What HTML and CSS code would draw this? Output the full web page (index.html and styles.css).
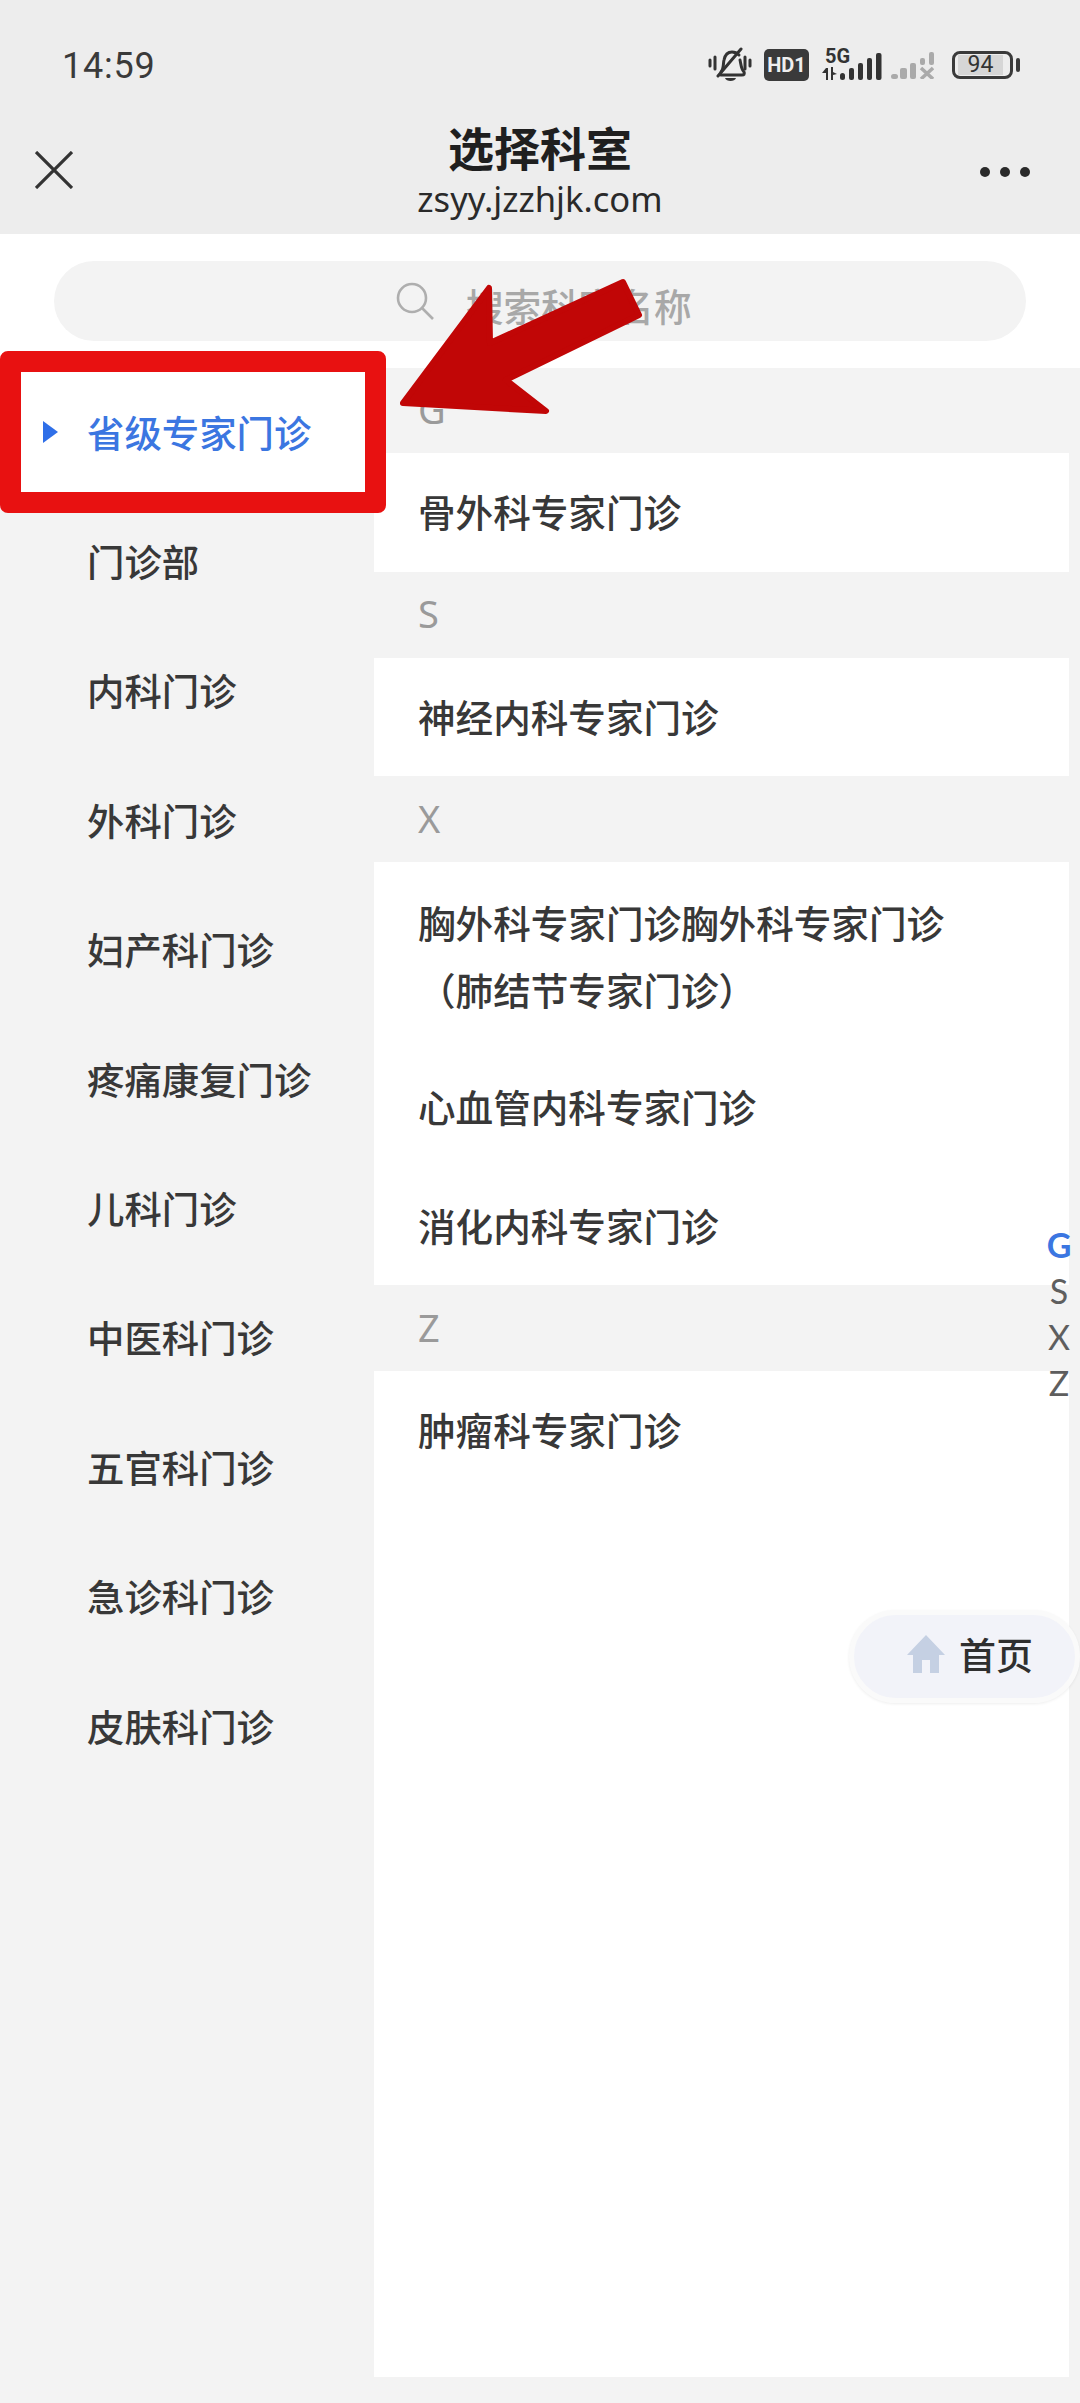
FILE: index.html
```html
<!DOCTYPE html>
<html lang="zh-CN">
<head>
<meta charset="utf-8">
<title>选择科室</title>
<link rel="stylesheet" href="styles.css">
</head>
<body>
<div class="page">
  <header class="topbar">
    <div class="status">
      <span class="clock">14:59</span>
      <div class="status-icons">
        <svg class="ico-bell" viewBox="0 0 44 36" width="44" height="36"><g fill="none" stroke="#333" stroke-width="3" stroke-linecap="round"><path d="M13 25c3-3 2-8 3-12 1-5 4-8 8-8 3 0 5 1 7 3M32 13c1 4 1 9 4 12 1 2 0 3-2 3H13"/><path d="M10 29 33 2"/><path d="M2 13v6M7 10v12M37 10v12M42 13v6"/></g><path d="M17 31h11c-1 4-10 4-11 0z" fill="#333"/></svg>
        <span class="hd">HD1</span>
        <div class="signal">
          <span class="fiveg">5G</span>
          <svg viewBox="0 0 60 27" width="60" height="27"><g fill="#333"><path d="M0 20 4 15h2v12H4v-7zM9 14h2v5l4 2-4 1v5H9z"/><rect x="18" y="20" width="5" height="7" rx="2.5"/><rect x="27" y="15" width="5" height="12" rx="2"/><rect x="36" y="10" width="5" height="17" rx="2"/><rect x="45" y="5" width="5" height="22" rx="2"/><rect x="54" y="0" width="5.5" height="27" rx="2"/></g></svg>
        </div>
        <svg class="signal-off" viewBox="0 0 43 27" width="43" height="27"><g fill="#aaa"><rect x="0" y="22" width="7" height="5" rx="2.5"/><rect x="9" y="16" width="7" height="11" rx="2"/><rect x="19" y="11" width="6" height="16" rx="2"/><rect x="29" y="6" width="5" height="7" rx="2"/><rect x="38" y="0" width="5" height="13" rx="2"/></g><path d="M30 16 42 27M42 16 30 27" stroke="#aaa" stroke-width="3.5"/></svg>
        <div class="battery"><span class="battery-level">94</span></div>
      </div>
    </div>
    <div class="titlebar">
      <svg class="close" viewBox="0 0 38 38" width="38" height="38"><path d="M1 1 37 37M37 1 1 37" stroke="#333" stroke-width="3.2" fill="none"/></svg>
      <div class="title-block">
        <div class="title">选择科室</div>
        <div class="url">zsyy.jzzhjk.com</div>
      </div>
      <div class="more"><i></i><i></i><i></i></div>
    </div>
  </header>

  <div class="search-wrap">
    <div class="search">
      <svg viewBox="0 0 40 40" width="40" height="40"><circle cx="17" cy="17" r="14" fill="none" stroke="#aeaeae" stroke-width="2.6"/><path d="M27 27 38 38" stroke="#aeaeae" stroke-width="2.6"/></svg>
      <span class="placeholder">搜索科室名称</span>
    </div>
  </div>

  <main class="content">
    <nav class="sidebar">
      <a class="side-item active">省级专家门诊</a>
      <a class="side-item">门诊部</a>
      <a class="side-item">内科门诊</a>
      <a class="side-item">外科门诊</a>
      <a class="side-item">妇产科门诊</a>
      <a class="side-item">疼痛康复门诊</a>
      <a class="side-item">儿科门诊</a>
      <a class="side-item">中医科门诊</a>
      <a class="side-item">五官科门诊</a>
      <a class="side-item">急诊科门诊</a>
      <a class="side-item">皮肤科门诊</a>
    </nav>
    <section class="list">
      <h2 class="letter">G</h2>
      <div class="group"><a class="row">骨外科专家门诊</a></div>
      <h2 class="letter">S</h2>
      <div class="group"><a class="row">神经内科专家门诊</a></div>
      <h2 class="letter">X</h2>
      <div class="group">
        <a class="row row-wrap">胸外科专家门诊胸外科专家门诊（肺结节专家门诊）</a>
        <a class="row">心血管内科专家门诊</a>
        <a class="row">消化内科专家门诊</a>
      </div>
      <h2 class="letter">Z</h2>
      <div class="group group-fill"><a class="row">肿瘤科专家门诊</a></div>
    </section>
  </main>
</div>

<div class="index-rail"><span class="on">G</span><span>S</span><span>X</span><span>Z</span></div>

<a class="home-btn">
  <svg viewBox="0 0 40 38" width="40" height="38"><path d="M20 0 39 20h-6v18H24V25h-8v13H7V20H1z" fill="#c5d0e3"/></svg>
  <span>首页</span>
</a>

<div class="mark-box"></div>
<svg class="mark-arrow" viewBox="0 0 250 150" width="250" height="150"><path d="M5 129 91 14 92 69 225 8 241 41 108 106 148 137z" fill="#c10606" stroke="#c10606" stroke-width="6" stroke-linejoin="round"/></svg>
</body>
</html>
```

FILE: styles.css
```css
* { box-sizing: border-box; }

html, body { margin: 0; padding: 0; }

body {
  position: relative;
  width: 1080px;
  height: 2403px;
  overflow: hidden;
  background: #f3f3f3;
  color: #333;
  font-family: "Noto Sans CJK SC", "Noto Sans", sans-serif;
}

.page { display: flex; flex-direction: column; height: 2403px; }

/* system status and title */
.topbar { height: 234px; background: #ededed; flex: none; }

.status {
  height: 130px;
  padding: 45px 61px 0 62px;
  display: flex;
  justify-content: space-between;
  align-items: flex-start;
}

.clock {
  font-family: Roboto, sans-serif;
  font-size: 36px;
  letter-spacing: .8px;
  line-height: 42px;
  color: #3a3a3a;
}

.status-icons { display: flex; align-items: center; height: 36px; margin-top: 2px; }

.hd {
  width: 45px;
  height: 32px;
  margin-left: 12px;
  border-radius: 5px;
  background: #3a3a3a;
  color: #eee;
  font: 700 20px/32px Roboto, sans-serif;
  text-align: center;
}

.signal { position: relative; width: 60px; height: 30px; margin-left: 13px; }
.signal svg { position: absolute; left: 0; top: 3px; }

.fiveg {
  position: absolute;
  left: 3px;
  top: -3px;
  font: 700 20px/18px Roboto, sans-serif;
  color: #333;
}

.signal-off { margin-left: 9px; }

.battery {
  position: relative;
  width: 61px;
  height: 28px;
  margin: 0 6px 0 18px;
  padding: 1px 3px;
  border: 3px solid #3a3a3a;
  border-radius: 8px;
}

.battery::after {
  content: "";
  position: absolute;
  right: -10px;
  top: 4px;
  width: 4px;
  height: 14px;
  border-radius: 2px;
  background: #3a3a3a;
}

.battery-level {
  display: block;
  width: 45px;
  height: 20px;
  background: #d6d6d6;
  font: 400 23px/20px Roboto, sans-serif;
  color: #333;
  text-align: center;
}

.titlebar {
  height: 104px;
  position: relative;
  display: flex;
  justify-content: center;
  align-items: flex-start;
}

.close { position: absolute; left: 35px; top: 21px; }

.title-block { text-align: center; margin-top: -9px; }

.title {
  font-size: 46px;
  font-weight: 700;
  line-height: 50px;
  color: #1f1f1f;
}

.url {
  font-family: "Noto Sans", sans-serif;
  font-size: 34.6px;
  line-height: 38px;
  margin-top: 9px;
  color: #2a2a2a;
}

.more { position: absolute; right: 50px; top: 37px; display: flex; gap: 10px; }
.more i { width: 10px; height: 10px; border-radius: 50%; background: #2a2a2a; }

/* search */
.search-wrap { height: 134px; background: #fff; padding: 27px 54px 0; flex: none; }

.search {
  height: 80px;
  border-radius: 40px;
  background: #f3f3f3;
  display: flex;
  align-items: center;
  padding-left: 341px;
  gap: 31px;
}

.placeholder { font-size: 37.6px; font-weight: 500; color: #a8a8a8; padding-top: 7px; }

/* two-column body */
.content { flex: 1; display: flex; min-height: 0; }

.sidebar { width: 374px; flex: none; display: flex; flex-direction: column; }

.side-item {
  height: 129.4px;
  padding: 0 0 2px 87px;
  display: flex;
  align-items: center;
  font-size: 37.4px;
  font-weight: 500;
  color: #383838;
}

.side-item.active { position: relative; color: #3b76e1; background: #fff; }

.side-item.active::before {
  content: "";
  position: absolute;
  left: 43px;
  top: 53px;
  border-left: 15px solid #2f6fe8;
  border-top: 11px solid transparent;
  border-bottom: 11px solid transparent;
}

.list { width: 695px; flex: none; display: flex; flex-direction: column; padding-bottom: 26px; }

.letter {
  margin: 0;
  height: 86px;
  padding: 0 0 3px 44px;
  display: flex;
  align-items: center;
  font: 400 38px/1 "Noto Sans", sans-serif;
  color: #9a9a9a;
}

.letter:first-child { height: 85px; }

.group { background: #fff; }
.group-fill { flex: 1; }

.row {
  display: block;
  padding: 35px 44px 37px 44px;
  font-size: 37.6px;
  font-weight: 500;
  line-height: 46.6px;
  color: #383838;
}

.row-wrap { padding: 26px 60px 26px 44px; line-height: 67px; }

/* letter index along the right edge */
.index-rail {
  position: absolute;
  right: 9px;
  top: 1222px;
  width: 24px;
  display: flex;
  flex-direction: column;
  align-items: center;
  font: 400 34px/46px Lato, sans-serif;
  color: #5e5e5e;
}

.index-rail .on { color: #3b76e1; font-weight: 700; }

/* floating home shortcut */
.home-btn {
  position: absolute;
  left: 849px;
  top: 1610px;
  width: 231px;
  height: 93px;
  border-radius: 47px;
  background: #f2f3f9;
  border: 5px solid #fafafa;
  box-shadow: 0 1px 3px rgba(0, 0, 0, .07);
  display: flex;
  align-items: center;
  padding: 0 0 5px 52px;
  gap: 13px;
  font-size: 37px;
  font-weight: 500;
  color: #2f2f2f;
}

/* annotation drawn over the page */
.mark-box {
  position: absolute;
  left: 0;
  top: 351px;
  width: 386px;
  height: 162px;
  border: 21px solid #e81111;
  border-radius: 8px;
}

.mark-arrow { position: absolute; left: 398px; top: 274px; }
```
